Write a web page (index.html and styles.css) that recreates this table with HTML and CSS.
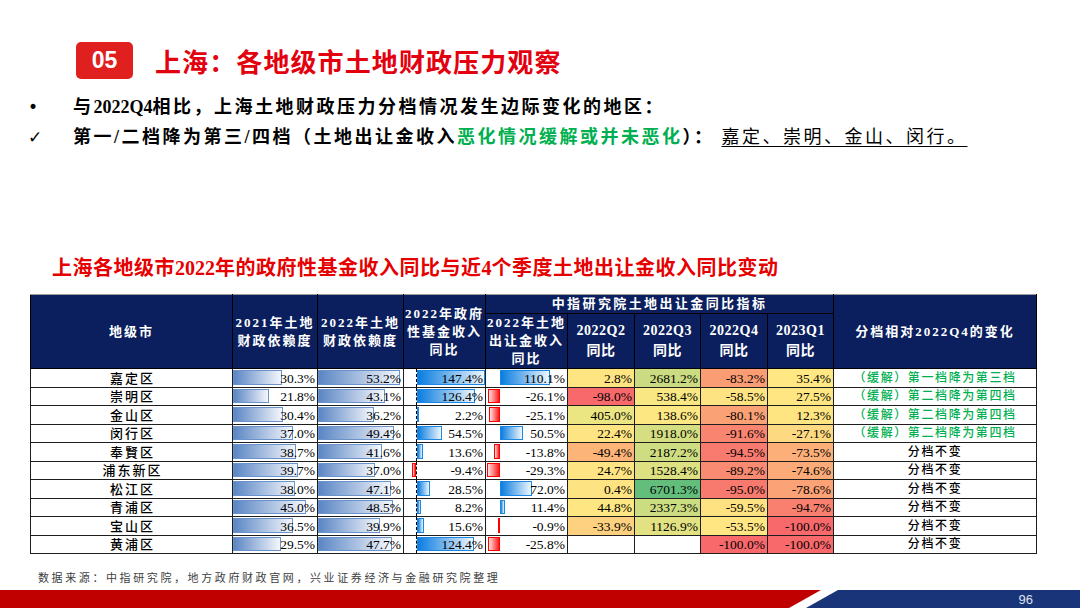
FILE: index.html
```html
<!DOCTYPE html>
<html lang="zh-CN">
<head>
<meta charset="utf-8">
<title>上海：各地级市土地财政压力观察</title>
<link rel="stylesheet" href="styles.css">
</head>
<body>
<header class="slide-head">
  <div class="badge">05</div>
  <h1 class="title">上海：各地级市土地财政压力观察</h1>
</header>

<section class="points">
  <p class="point"><span class="mark">•</span><span>与<b class="lat">2022Q4</b>相比，上海土地财政压力分档情况发生边际变化的地区：</span></p>
  <p class="point"><span class="mark">✓</span><span>第一/二档降为第三/四档（土地出让金收入<em class="green">恶化情况缓解或并未恶化</em>）： <u class="plain">嘉定、崇明、金山、闵行。</u></span></p>
</section>

<h2 class="caption">上海各地级市<b class="lat">2022</b>年的政府性基金收入同比与近<b class="lat">4</b>个季度土地出让金收入同比变动</h2>

<table class="tbl">
  <colgroup>
    <col class="c-name"><col class="c-dep"><col class="c-dep2"><col class="c-fund"><col class="c-land">
    <col class="c-q"><col class="c-q3"><col class="c-q"><col class="c-q3"><col class="c-chg">
  </colgroup>
  <thead>
    <tr class="h1">
      <th rowspan="2">地级市</th>
      <th rowspan="2" class="hv">2021年土地<br>财政依赖度</th>
      <th rowspan="2" class="hv">2022年土地<br>财政依赖度</th>
      <th rowspan="2" class="hv">2022年政府<br>性基金收入<br>同比</th>
      <th colspan="5" class="grp">中指研究院土地出让金同比指标</th>
      <th rowspan="2">分档相对2022Q4的变化</th>
    </tr>
    <tr class="h2">
      <th class="hv">2022年土地<br>出让金收入<br>同比</th>
      <th class="hq">2022Q2<br>同比</th>
      <th class="hq">2022Q3<br>同比</th>
      <th class="hq">2022Q4<br>同比</th>
      <th class="hq">2023Q1<br>同比</th>
    </tr>
  </thead>
  <tbody>
    <tr>
      <td class="name">嘉定区</td>
      <td><div class="dbar"><i class="bar bb" style="width:49.4px"></i><span>30.3%</span></div></td>
      <td><div class="dbar"><i class="bar bb" style="width:82.2px"></i><span>53.2%</span></div></td>
      <td><div class="axis ax3"><div class="neg"></div><div class="pos dashed"><i class="bar pb" style="width:67.8px"></i></div><span>147.4%</span></div></td>
      <td><div class="axis ax4"><div class="neg"></div><div class="pos"><i class="bar pb" style="width:49.5px"></i></div><span>110.1%</span></div></td>
      <td class="num" style="background:#fee582">2.8%</td>
      <td class="num" style="background:#cbdb81">2681.2%</td>
      <td class="num" style="background:#fa9c74">-83.2%</td>
      <td class="num" style="background:#ffe884">35.4%</td>
      <td class="chg green">（缓解）第一档降为第三档</td>
    </tr>
    <tr>
      <td class="name">崇明区</td>
      <td><div class="dbar"><i class="bar bb" style="width:35.5px"></i><span>21.8%</span></div></td>
      <td><div class="dbar"><i class="bar bb" style="width:66.6px"></i><span>43.1%</span></div></td>
      <td><div class="axis ax3"><div class="neg"></div><div class="pos dashed"><i class="bar pb" style="width:58.1px"></i></div><span>126.4%</span></div></td>
      <td><div class="axis ax4"><div class="neg"><i class="bar nb" style="width:11.7px"></i></div><div class="pos"></div><span>-26.1%</span></div></td>
      <td class="num" style="background:#f8696b">-98.0%</td>
      <td class="num" style="background:#f8e783">538.4%</td>
      <td class="num" style="background:#fee382">-58.5%</td>
      <td class="num" style="background:#ffe683">27.5%</td>
      <td class="chg green">（缓解）第二档降为第四档</td>
    </tr>
    <tr>
      <td class="name">金山区</td>
      <td><div class="dbar"><i class="bar bb" style="width:49.6px"></i><span>30.4%</span></div></td>
      <td><div class="dbar"><i class="bar bb" style="width:55.9px"></i><span>36.2%</span></div></td>
      <td><div class="axis ax3"><div class="neg"></div><div class="pos dashed"><i class="bar pb" style="width:2px"></i></div><span>2.2%</span></div></td>
      <td><div class="axis ax4"><div class="neg"><i class="bar nb" style="width:11.3px"></i></div><div class="pos"></div><span>-25.1%</span></div></td>
      <td class="num" style="background:#ebe582">405.0%</td>
      <td class="num" style="background:#fde783">138.6%</td>
      <td class="num" style="background:#faa175">-80.1%</td>
      <td class="num" style="background:#ffe482">12.3%</td>
      <td class="chg green">（缓解）第二档降为第四档</td>
    </tr>
    <tr>
      <td class="name">闵行区</td>
      <td><div class="dbar"><i class="bar bb" style="width:60.3px"></i><span>37.0%</span></div></td>
      <td><div class="dbar"><i class="bar bb" style="width:76.3px"></i><span>49.4%</span></div></td>
      <td><div class="axis ax3"><div class="neg"></div><div class="pos dashed"><i class="bar pb" style="width:25.1px"></i></div><span>54.5%</span></div></td>
      <td><div class="axis ax4"><div class="neg"></div><div class="pos"><i class="bar pb" style="width:22.7px"></i></div><span>50.5%</span></div></td>
      <td class="num" style="background:#fee482">22.4%</td>
      <td class="num" style="background:#d5df82">1918.0%</td>
      <td class="num" style="background:#f98571">-91.6%</td>
      <td class="num" style="background:#fdda81">-27.1%</td>
      <td class="chg green">（缓解）第二档降为第四档</td>
    </tr>
    <tr>
      <td class="name">奉賢区</td>
      <td><div class="dbar"><i class="bar bb" style="width:63.1px"></i><span>38.7%</span></div></td>
      <td><div class="dbar"><i class="bar bb" style="width:64.3px"></i><span>41.6%</span></div></td>
      <td><div class="axis ax3"><div class="neg"></div><div class="pos dashed"><i class="bar pb" style="width:6.3px"></i></div><span>13.6%</span></div></td>
      <td><div class="axis ax4"><div class="neg"><i class="bar nb" style="width:6.2px"></i></div><div class="pos"></div><span>-13.8%</span></div></td>
      <td class="num" style="background:#fcb479">-49.4%</td>
      <td class="num" style="background:#cfdd82">2187.2%</td>
      <td class="num" style="background:#f97b6f">-94.5%</td>
      <td class="num" style="background:#fcaf78">-73.5%</td>
      <td class="chg">分档不变</td>
    </tr>
    <tr>
      <td class="name">浦东新区</td>
      <td><div class="dbar"><i class="bar bb" style="width:64.7px"></i><span>39.7%</span></div></td>
      <td><div class="dbar"><i class="bar bb" style="width:57.2px"></i><span>37.0%</span></div></td>
      <td><div class="axis ax3"><div class="neg"><i class="bar nb" style="width:4.3px"></i></div><div class="pos dashed"></div><span>-9.4%</span></div></td>
      <td><div class="axis ax4"><div class="neg"><i class="bar nb" style="width:13.2px"></i></div><div class="pos"></div><span>-29.3%</span></div></td>
      <td class="num" style="background:#fee482">24.7%</td>
      <td class="num" style="background:#dde182">1528.4%</td>
      <td class="num" style="background:#f98b72">-89.2%</td>
      <td class="num" style="background:#fbab77">-74.6%</td>
      <td class="chg">分档不变</td>
    </tr>
    <tr>
      <td class="name">松江区</td>
      <td><div class="dbar"><i class="bar bb" style="width:61.9px"></i><span>38.0%</span></div></td>
      <td><div class="dbar"><i class="bar bb" style="width:72.8px"></i><span>47.1%</span></div></td>
      <td><div class="axis ax3"><div class="neg"></div><div class="pos dashed"><i class="bar pb" style="width:13.1px"></i></div><span>28.5%</span></div></td>
      <td><div class="axis ax4"><div class="neg"></div><div class="pos"><i class="bar pb" style="width:32.4px"></i></div><span>72.0%</span></div></td>
      <td class="num" style="background:#fee382">0.4%</td>
      <td class="num" style="background:#63be7b">6701.3%</td>
      <td class="num" style="background:#f8796e">-95.0%</td>
      <td class="num" style="background:#fba276">-78.6%</td>
      <td class="chg">分档不变</td>
    </tr>
    <tr>
      <td class="name">青浦区</td>
      <td><div class="dbar"><i class="bar bb" style="width:73.4px"></i><span>45.0%</span></div></td>
      <td><div class="dbar"><i class="bar bb" style="width:74.9px"></i><span>48.5%</span></div></td>
      <td><div class="axis ax3"><div class="neg"></div><div class="pos dashed"><i class="bar pb" style="width:3.8px"></i></div><span>8.2%</span></div></td>
      <td><div class="axis ax4"><div class="neg"></div><div class="pos"><i class="bar pb" style="width:5.1px"></i></div><span>11.4%</span></div></td>
      <td class="num" style="background:#fee783">44.8%</td>
      <td class="num" style="background:#cbdc81">2337.3%</td>
      <td class="num" style="background:#fee282">-59.5%</td>
      <td class="num" style="background:#f9806f">-94.7%</td>
      <td class="chg">分档不变</td>
    </tr>
    <tr>
      <td class="name">宝山区</td>
      <td><div class="dbar"><i class="bar bb" style="width:59.5px"></i><span>36.5%</span></div></td>
      <td><div class="dbar"><i class="bar bb" style="width:61.6px"></i><span>39.9%</span></div></td>
      <td><div class="axis ax3"><div class="neg"></div><div class="pos dashed"><i class="bar pb" style="width:7.2px"></i></div><span>15.6%</span></div></td>
      <td><div class="axis ax4"><div class="neg"><i class="bar nb" style="width:1px"></i></div><div class="pos"></div><span>-0.9%</span></div></td>
      <td class="num" style="background:#fdd17f">-33.9%</td>
      <td class="num" style="background:#e3e283">1126.9%</td>
      <td class="num" style="background:#ffe683">-53.5%</td>
      <td class="num" style="background:#f8696b">-100.0%</td>
      <td class="chg">分档不变</td>
    </tr>
    <tr>
      <td class="name">黄浦区</td>
      <td><div class="dbar"><i class="bar bb" style="width:48.1px"></i><span>29.5%</span></div></td>
      <td><div class="dbar"><i class="bar bb" style="width:73.7px"></i><span>47.7%</span></div></td>
      <td><div class="axis ax3"><div class="neg"></div><div class="pos dashed"><i class="bar pb" style="width:57.2px"></i></div><span>124.4%</span></div></td>
      <td><div class="axis ax4"><div class="neg"><i class="bar nb" style="width:11.6px"></i></div><div class="pos"></div><span>-25.8%</span></div></td>
      <td class="num"></td>
      <td class="num"></td>
      <td class="num" style="background:#f8696b">-100.0%</td>
      <td class="num" style="background:#f8696b">-100.0%</td>
      <td class="chg">分档不变</td>
    </tr>
  </tbody>
</table>

<p class="source">数据来源：中指研究院，地方政府财政官网，兴业证券经济与金融研究院整理</p>

<footer class="foot">
  <svg class="foot-bg" width="1080" height="18" viewBox="0 0 1080 18" aria-hidden="true">
    <polygon points="0,0 821,0 789,18 0,18" fill="#c00000"/>
    <polygon points="838,0 1080,0 1080,18 806,18" fill="#1a347a"/>
  </svg>
  <span class="page">96</span>
</footer>
</body>
</html>
```

FILE: styles.css
```css
* { box-sizing: border-box; margin: 0; padding: 0; }

html, body {
  width: 1080px;
  height: 608px;
  overflow: hidden;
  background: #fff;
}

body {
  font-family: "Liberation Serif", "Noto Sans CJK SC", serif;
  color: #000;
  display: flex;
  flex-direction: column;
}

/* ---------- heading ---------- */
.slide-head {
  display: flex;
  align-items: center;
  gap: 22px;
  padding: 42px 0 0 76px;
  height: 80px;
}

.badge {
  width: 57px;
  height: 37px;
  border-radius: 5px;
  background: #e0201f;
  color: #fff;
  font: 700 23px "Liberation Sans", sans-serif;
  display: flex;
  align-items: center;
  justify-content: center;
}

.title {
  font: 700 26px "Noto Sans CJK SC", sans-serif;
  color: #e3000f;
  letter-spacing: 1.1px;
}

/* ---------- bullet points ---------- */
.points {
  margin-top: 13px;
  font-family: "Liberation Serif", "Noto Sans CJK SC", serif;
  font-size: 18px;
  font-weight: 700;
  line-height: 30px;
  letter-spacing: 2.5px;
}

.point {
  display: grid;
  grid-template-columns: 45px auto;
  padding-left: 28px;
}

.mark { font-family: "DejaVu Sans", sans-serif; font-weight: 400; font-size: 17px; letter-spacing: 0; }

.lat { font-family: "Liberation Serif", serif; font-weight: 700; letter-spacing: 0; }

.green { color: #00b050; font-style: normal; }

.plain {
  font-weight: 400;
  text-decoration: underline;
  text-decoration-thickness: 1px;
  text-underline-offset: 3px;
}

/* ---------- caption ---------- */
.caption {
  margin: 103px 0 0 52px;
  font-family: "Liberation Serif", "Noto Sans CJK SC", serif;
  font-size: 20px;
  font-weight: 700;
  line-height: 26px;
  letter-spacing: 0.5px;
  color: #e60000;
}

/* ---------- table ---------- */
.tbl {
  margin: 13px 0 0 30px;
  width: 1006px;
  border-collapse: collapse;
  table-layout: fixed;
  font-size: 13.5px;
}

.c-name { width: 202px; }
.c-dep  { width: 85px; }
.c-dep2 { width: 86px; }
.c-fund { width: 82px; }
.c-land { width: 82px; }
.c-q    { width: 67px; }
.c-q3   { width: 66px; }
.c-chg  { width: 203px; }

.tbl th {
  background: #0b1f5e;
  color: #fff;
  font-family: "Liberation Serif", "Noto Sans CJK SC", serif;
  font-weight: 700;
  font-size: 13px;
  letter-spacing: 2px;
  line-height: 18px;
  border: 1px solid #000;
  text-align: center;
  vertical-align: middle;
  padding: 0;
}

.tbl thead tr:first-child th { border-top-color: #9a9a9a; }
.tbl .h1 { height: 18px; }
.tbl .h2 { height: 55px; }
.tbl .grp { letter-spacing: 2.4px; }
.tbl .hq { font-size: 14px; letter-spacing: 0.5px; line-height: 20px; }

.tbl td {
  border: 1px solid #1e1e1e;
  padding: 0;
  height: 18.5px;
  line-height: 17px;
  white-space: nowrap;
}

.tbl tbody tr { height: 18.5px; }

.name {
  text-align: center;
  font-size: 13px;
  font-weight: 500;
  letter-spacing: 2px;
  text-indent: 2px;
}

.num {
  text-align: right;
  padding-right: 2px !important;
}

.chg {
  text-align: center;
  font-size: 12px;
  font-weight: 500;
  letter-spacing: 1.6px;
}

.chg.green { color: #00b050; }

/* data bars */
.dbar,
.axis {
  display: grid;
  height: 17.5px;
  align-items: stretch;
}

.dbar > * { grid-area: 1 / 1; }

.dbar span,
.axis span {
  justify-self: end;
  align-self: center;
  padding-right: 2px;
  position: relative;
}

.bar {
  display: block;
  min-width: 1px;
  margin: 1px 0 2px;
}

.dbar .bar { justify-self: start; }

.bb {
  background: linear-gradient(to right, #5b86c4, #f4f7fc);
  border: 1px solid #6b93cb;
}

.pb {
  background: linear-gradient(to right, #0a7de0, #eef6fd);
  border: 1px solid #1a87e4;
}

.nb {
  background: linear-gradient(to right, #ffe2e2, #ff1a1a);
  border: 1px solid #ff0000;
}

.axis.ax3 { grid-template-columns: 12px 1fr; }
.axis.ax4 { grid-template-columns: 14px 1fr; }

.axis .neg {
  grid-area: 1 / 1;
  display: flex;
  justify-content: flex-end;
}

.axis .pos {
  grid-area: 1 / 2;
  display: flex;
  justify-content: flex-start;
}

.axis .pos.dashed { border-left: 1px dashed #000; }

.axis span { grid-area: 1 / 1 / 2 / 3; }

/* ---------- source & footer ---------- */
.source {
  margin: 15px 0 0 38px;
  font-family: "Noto Sans CJK SC", sans-serif;
  font-size: 11px;
  line-height: 16px;
  letter-spacing: 2.6px;
  color: #404040;
}

.foot {
  position: relative;
  margin-top: 5px;
  height: 18px;
  display: flex;
  align-items: center;
  justify-content: flex-end;
  padding-right: 47px;
}

.foot-bg {
  position: absolute;
  left: 0;
  top: 0;
}

.page {
  position: relative;
  font: 13px "Liberation Sans", sans-serif;
  color: #dfe2ec;
}
```
